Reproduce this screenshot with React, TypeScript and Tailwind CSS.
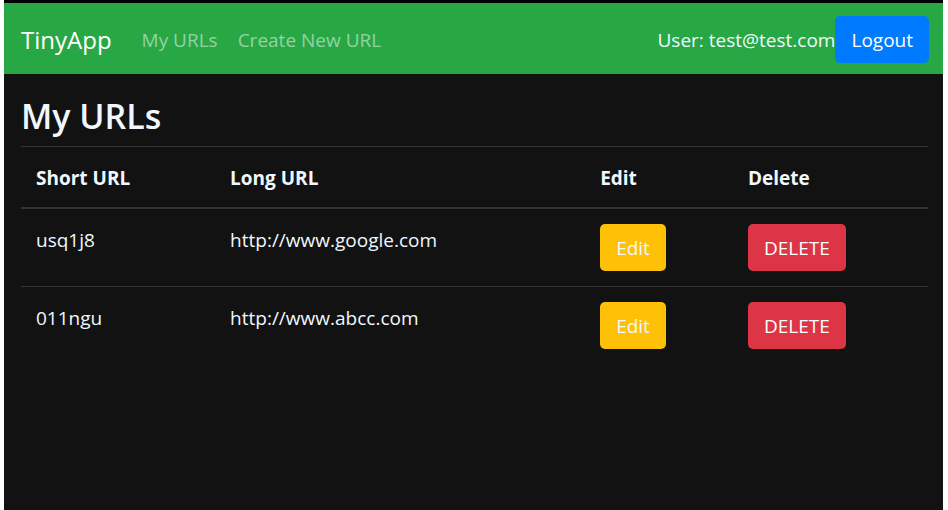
import type { ReactNode } from "react";

const urls = [
  { id: "usq1j8", longURL: "http://www.google.com" },
  { id: "011ngu", longURL: "http://www.abcc.com" },
];

function Button({ color, children }: { color: string; children: ReactNode }) {
  return (
    <button type="button" className={`h-[47px] rounded-[5px] px-4 leading-[30px] whitespace-nowrap ${color}`}>
      {children}
    </button>
  );
}

function NavBar() {
  return (
    <nav className="flex items-center bg-[#28a745] pt-[13px] pr-3.5 pb-[11px] pl-[17px]">
      <a href="#" className="mr-[30px] text-2xl text-white">
        TinyApp
      </a>
      <div className="flex gap-5 text-white/50">
        <a href="#urls">My URLs</a>
        <a href="#new">Create New URL</a>
      </div>
      <div className="ml-auto flex items-center">
        <span className="text-[#f0f8ff]">User: test@test.com</span>
        <Button color="bg-[#007bff] text-white">Logout</Button>
      </div>
    </nav>
  );
}

export default function App() {
  return (
    <div className="min-h-screen bg-white pr-[5px] pl-1 font-['Open_Sans','Noto_Sans',sans-serif] text-[19px] leading-[30px]">
      <div className="min-h-screen border-t-3 border-black bg-[#121212] text-[#f0f8ff]">
        <NavBar />
        <main className="pt-[21px] pr-[15px] pl-[17px]">
          <h1 className="mb-[9px] text-[34px] leading-[42px] font-semibold">My URLs</h1>
          <table className="w-full table-fixed border-separate border-spacing-0 border-t border-[#333333] text-left">
            <colgroup>
              <col className="w-[21.4%]" />
              <col className="w-[40.8%]" />
              <col className="w-[16.3%]" />
              <col className="w-[21.5%]" />
            </colgroup>
            <thead>
              <tr className="*:border-b-2 *:border-[#333333] *:px-[15px] *:pt-4 *:pb-3.5 *:font-bold">
                <th scope="col">Short URL</th>
                <th scope="col">Long URL</th>
                <th scope="col">Edit</th>
                <th scope="col">Delete</th>
              </tr>
            </thead>
            <tbody className="align-top">
              {urls.map((url) => (
                <tr
                  key={url.id}
                  className="align-top *:border-b *:border-[#333333] *:px-[15px] *:pb-[15px] last:*:border-b-0"
                >
                  <td className="pt-4">{url.id}</td>
                  <td className="pt-4">{url.longURL}</td>
                  <td className="pt-[15px]">
                    <Button color="bg-[#ffc107] text-[#f0f8ff]">Edit</Button>
                  </td>
                  <td className="pt-[15px]">
                    <Button color="bg-[#dc3545] text-white">DELETE</Button>
                  </td>
                </tr>
              ))}
            </tbody>
          </table>
        </main>
      </div>
    </div>
  );
}
